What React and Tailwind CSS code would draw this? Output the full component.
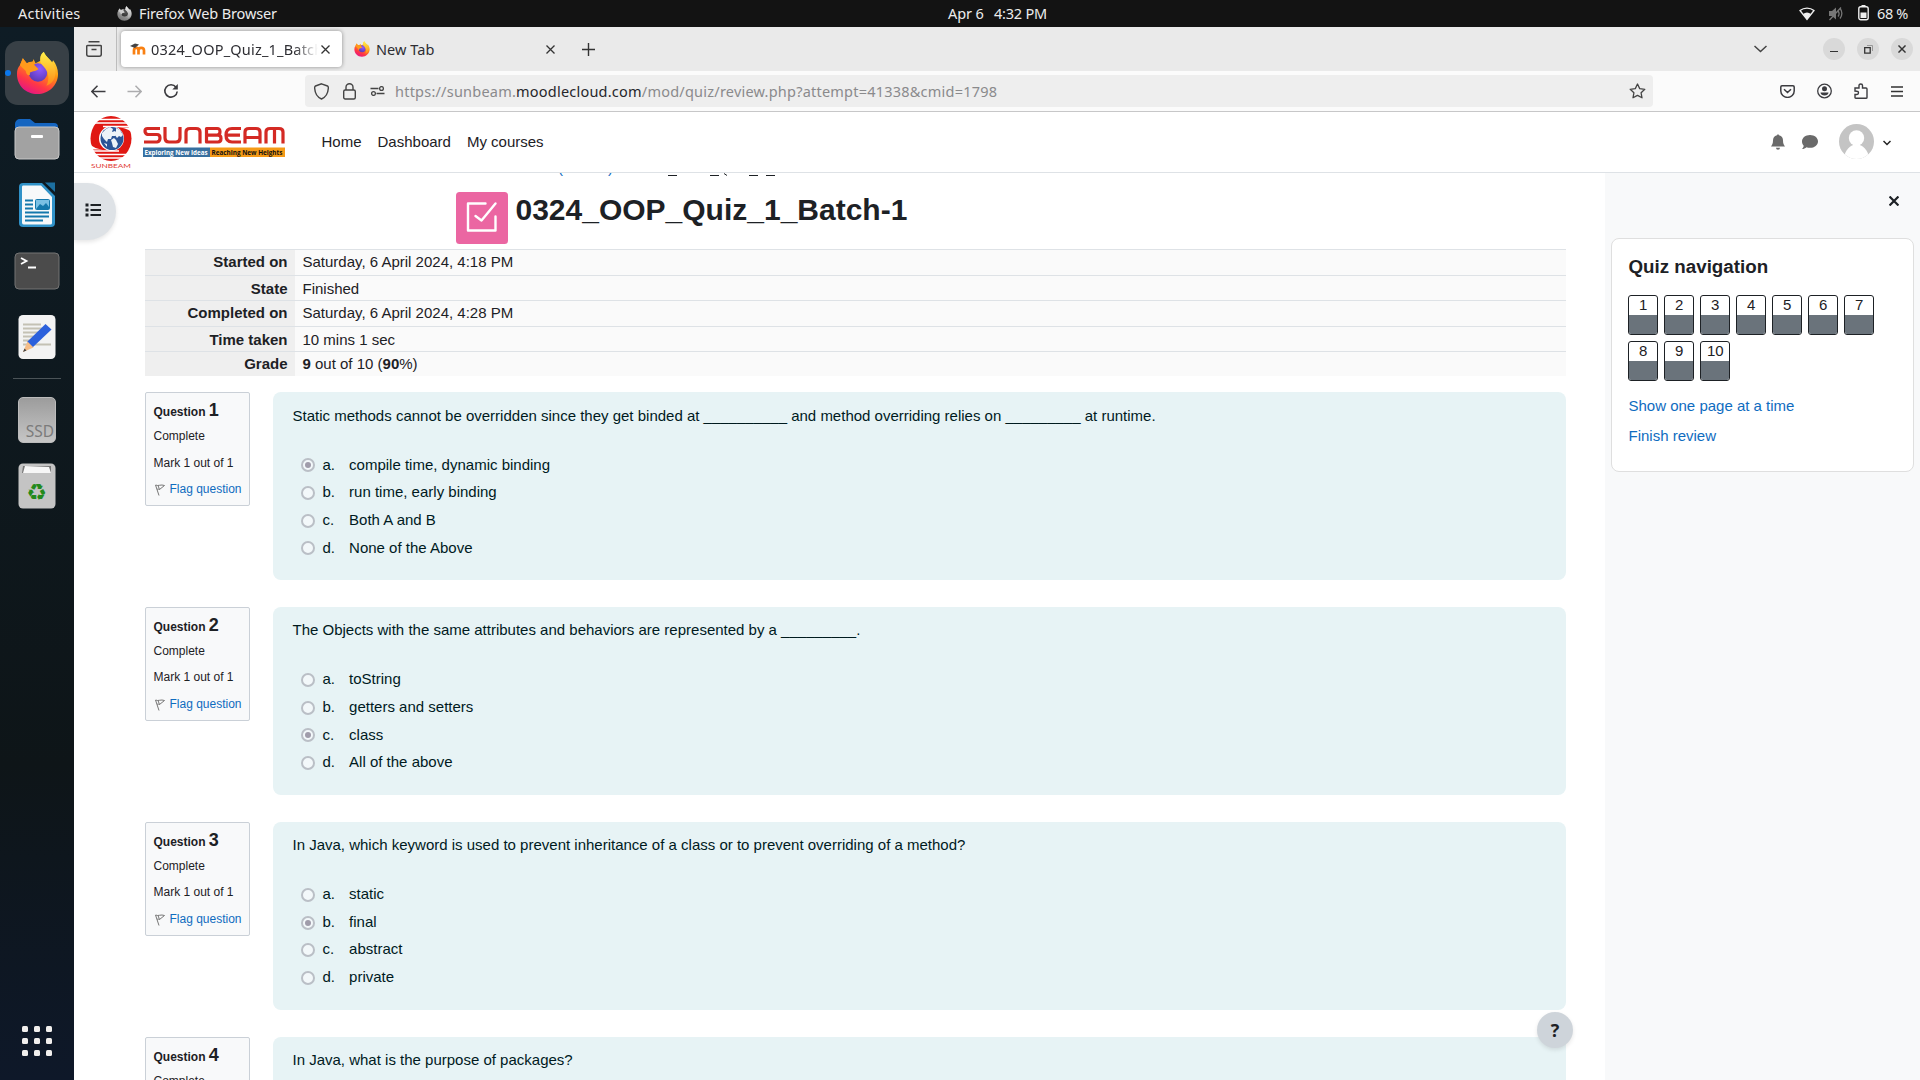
import React from "react";

const UB = "font-['Noto_Sans',sans-serif]";

function Firefox({ className, mono }) {
  const id = mono ? "m" : "c";
  return (
    <svg viewBox="0 0 44 44" className={className}>
      <defs>
        <linearGradient id={"o" + id} x1="0.8" y1="0" x2="0.3" y2="1">
          <stop offset="0" stopColor={mono ? "#eee" : "#fff44f"} />
          <stop offset="0.4" stopColor={mono ? "#bbb" : "#ff980e"} />
          <stop offset="0.75" stopColor={mono ? "#888" : "#ff3647"} />
          <stop offset="1" stopColor={mono ? "#777" : "#e31587"} />
        </linearGradient>
        <linearGradient id={"y" + id} x1="0.5" y1="0" x2="0.5" y2="1">
          <stop offset="0" stopColor={mono ? "#eee" : "#fff04a"} />
          <stop offset="1" stopColor={mono ? "#aaa" : "#ff8a16"} />
        </linearGradient>
        <radialGradient id={"p" + id} cx="0.6" cy="0.3" r="0.7">
          <stop offset="0" stopColor={mono ? "#555" : "#9059ff"} />
          <stop offset="1" stopColor={mono ? "#333" : "#5b3bb8"} />
        </radialGradient>
      </defs>
      <path d="M4 14 L7 7 L11 12 C13 11 15 10.500 17 10.500 L18 8 L20 12 L26 9 C24 5 26 2 28.500 0.500 C30 5 35 8 37 11 L38 9 C41 13 43 18 43 23 C43 35 33 43.500 22 43.500 C10 43.500 1 35 1 23 C1 19 2 16 4 14Z" fill={"url(#o" + id + ")"} />
      <circle cx="22.500" cy="21.500" r="9.500" fill={"url(#p" + id + ")"} />
      <path d="M28.500 0.500 C30 5 38 10 40 18 C42 28 36 34 31 35 C35 28 33 20 28 15 C23 11 24 4 28.500 0.500Z" fill={"url(#y" + id + ")"} />
      <path d="M4 14 L7 7 L11 12 C13 11 15 10.500 17 10.500 L18 8 L19 14 L23 18 C20 21 16 20 14 22 C16 24 11 27 10 20Z" fill={mono ? "#ccc" : "#ff9a1c"} />
    </svg>
  );
}

function TopBar() {
  return (
    <div className={"flex h-[27px] shrink-0 items-center bg-[#131313] text-[14.5px] text-[#ececec] " + UB}>
      <span className="ml-[18px] w-[99px] whitespace-nowrap tracking-[0.2px]">Activities</span>
      <Firefox mono className="h-[15px] w-[15px]" />
      <span className="ml-[7px] w-[809px] whitespace-nowrap tracking-[-0.12px]">Firefox Web Browser</span>
      <span className="w-[46px] whitespace-nowrap tracking-[-0.1px]">Apr 6</span>
      <span className="whitespace-nowrap tracking-[-0.2px]">4:32 PM</span>
      <div className="ml-auto flex items-center pr-[11px]">
        <svg width="16" height="14" viewBox="0 0 16 14" className="mr-[13px]">
          <path d="M1 3.500C5 0.200 11 0.200 15 3.500L8 12.500Z" fill="none" stroke="#eee" strokeWidth="1.300" />
          <path d="M4 7C6.500 5 9.500 5 12 7L8 12.500Z" fill="#eee" />
        </svg>
        <svg width="16" height="15" viewBox="0 0 16 15" fill="none" stroke="#777" strokeWidth="1.300" className="mr-[14px]">
          <path d="M1 5h3l4-3.500v12L4 10H1z" fill="#777" stroke="none" />
          <path d="M10 5c1.200 1.500 1.200 4 0 5.500M12 2.500c2.500 2.500 2.500 7 0 10M1.500 14L13 1.500" />
        </svg>
        <svg width="11" height="16" viewBox="0 0 11 16" className="mr-[8px] mb-[2px]">
          <path d="M3.500 0h4v2h-4z" fill="#eee" />
          <rect x="0.800" y="1.800" width="9.400" height="13" rx="2" fill="none" stroke="#eee" strokeWidth="1.400" />
          <path d="M2.500 7.500h6v5.500h-6z" fill="#eee" />
        </svg>
        <span className="w-[32px] whitespace-nowrap tracking-[-0.4px]">68 %</span>
      </div>
    </div>
  );
}

function Dock() {
  return (
    <div className="flex w-[74px] shrink-0 flex-col items-center bg-linear-to-b from-[#0e1c25] via-[#0e1518] via-70% to-[#0e1829]">
      <div className="mt-[14px] flex h-16 w-16 items-center rounded-[13px] bg-[#384046]">
        <span className="h-[6px] w-[6px] rounded-full bg-[#0a78ee]" />
        <Firefox className="ml-[5px] h-[44px] w-[43px]" />
      </div>
      <svg width="46" height="42" viewBox="0 0 46 42" className="mt-[13px]">
        <path d="M1 6a5 5 0 0 1 5-5h10l5 4h19a4 4 0 0 1 4 4v18H1z" fill="#1565c0" />
        <rect x="1" y="9" width="44" height="32" rx="4" fill="#a2a2a2" stroke="#c8c8c8" />
        <rect x="17" y="17" width="12" height="3" rx="1" fill="#fff" />
      </svg>
      <svg width="38" height="46" viewBox="0 0 38 46" className="mt-[22px]">
        <path d="M5 1h19L37 14v27a4 4 0 0 1-4 4H5a4 4 0 0 1-4-4V5a4 4 0 0 1 4-4z" fill="#3092c8" />
        <path d="M5 3.500h18L34 15v26a1.500 1.500 0 0 1-1.500 1.500H6A2 2 0 0 1 4 41V5a1.500 1.500 0 0 1 1-1.500z" fill="#f7f9fa" />
        <path d="M27 0.500h10v9.500z" fill="#1c6fa0" />
        <path d="M7 18.500h8M7 22.500h8M7 26.500h8M7 30.500h24M7 34.500h24M7 38.500h18" stroke="#1478ac" strokeWidth="2" />
        <rect x="17.500" y="17.500" width="14" height="10" rx="1" fill="#7ac0e4" stroke="#1478ac" />
        <path d="M18 27l4-5 3 2 3-3 3 4v2z" fill="#1478ac" />
      </svg>
      <svg width="46" height="38" viewBox="0 0 46 38" className="mt-[24px]">
        <rect x="1" y="1" width="44" height="36" rx="4" fill="#4b4b4b" stroke="#747474" />
        <path d="M7 6l5.500 3L7 12M14 15.500h8" fill="none" stroke="#fff" strokeWidth="1.800" />
      </svg>
      <svg width="38" height="46" viewBox="0 0 38 46" className="mt-[24px]">
        <rect x="0.500" y="1" width="37" height="44" rx="4.500" fill="#f3f3f3" />
        <path d="M5 10.500h18M5 14.500h22M5 18.500h18M5 22.500h14M5 26.500h10M5 30.500h28" stroke="#c4c1b4" strokeWidth="2" />
        <path d="M27.500 10l6 5.500L14.500 33.500l-5.500-5.500z" fill="#2b60dc" />
        <path d="M9.500 27.500l6 6L5 38z" fill="#f5bd88" />
        <path d="M6.500 34.500l2 2L5 38z" fill="#444" />
      </svg>
      <div className="mt-[18px] h-px w-[48px] bg-[#4b5357]" />
      <div className="mt-[18px] flex h-[46px] w-[38px] items-end justify-end rounded-[5px] border border-[#bbb] bg-linear-to-b from-[#9c9c9c] to-[#c6c6c6] pr-px font-['Noto_Sans',sans-serif] text-[15.500px] leading-[22px] text-[#7b7b7b]">SSD</div>
      <svg width="38" height="46" viewBox="0 0 38 46" className="mt-[20px]">
        <rect x="0.500" y="0.500" width="37" height="45" rx="4.500" fill="#c4c4c4" />
        <path d="M5 3h28v7H4z" fill="#777" />
        <path d="M7 3l24 1 2 6H5z" fill="#f7f7f7" />
        <text x="18.500" y="36.500" textAnchor="middle" fontSize="23" fill="#238a1c" fontFamily="DejaVu Sans, sans-serif">♻</text>
      </svg>
      <div className="mt-auto mb-[24px] grid grid-cols-3 gap-x-[6px] gap-y-[6px]">
        {Array.from({ length: 9 }, (_, i) => (
          <span key={i} className="h-[6px] w-[6px] rounded-[1.5px] bg-[#f1efed]" />
        ))}
      </div>
    </div>
  );
}

function CloseX({ size = 9, w = 1.3, color = "#333" }) {
  return (
    <svg width={size} height={size} viewBox="0 0 9 9" stroke={color} strokeWidth={w}>
      <path d="M0.500 0.500L8.500 8.500M8.500 0.500L0.500 8.500" />
    </svg>
  );
}

function TabBar() {
  return (
    <div className={"flex h-[44px] shrink-0 items-center bg-[#eaeaea] text-[14.5px] text-[#2e2e33] " + UB}>
      <div className="flex h-full w-[43px] items-center justify-center border-r border-[#bdbdbd] pr-[2px]">
        <svg width="16" height="17" viewBox="0 0 16 17" fill="none" stroke="#444" strokeWidth="1.500">
          <path d="M2.500 0.800h11M1.500 4.500h13a0.800 0.800 0 0 1 .8.800v8a2 2 0 0 1-2 2H2.700a2 2 0 0 1-2-2v-8a.8.8 0 0 1 .8-.8zM5.500 8.500h5" />
        </svg>
      </div>
      <div className="ml-[4px] flex h-[36px] w-[221px] items-center rounded-[4px] bg-white pl-[9px] shadow-[0_0_4px_rgba(0,0,0,0.4)]">
        <svg width="16" height="12" viewBox="0 0 16 12">
          <path d="M4 11.500V7.500C4 4 8.500 4 8.500 7.500V11.500M8.500 7.500C8.500 4 14 4 14 7.500V11.500" fill="none" stroke="#f98012" strokeWidth="2.700" />
          <path d="M0 3L5 0.500L9 1.500L5 5Z" fill="#444" />
        </svg>
        <div className="mt-[2px] ml-[5px] w-[167px] overflow-hidden whitespace-nowrap tracking-[0.2px] [mask-image:linear-gradient(to_right,black_86%,transparent)]">0324_OOP_Quiz_1_Batch-1</div>
        <div className="ml-[3px]"><CloseX /></div>
      </div>
      <Firefox className="ml-[12px] h-[16px] w-[16px]" />
      <span className="mt-[2px] ml-[6px] w-[170px] tracking-[0.05px]">New Tab</span>
      <CloseX />
      <svg width="13" height="13" viewBox="0 0 13 13" stroke="#333" strokeWidth="1.400" className="ml-[27px]"><path d="M6.500 0v13M0 6.500h13" /></svg>
      <div className="ml-auto flex items-center pr-[7px]">
        <svg width="13" height="8" viewBox="0 0 13 8" fill="none" stroke="#444" strokeWidth="1.500" className="mr-[56px]"><path d="M0.500 1l6 5.500 6-5.500" /></svg>
        <div className="flex gap-[12px]">
          <div className="flex h-[22px] w-[22px] items-center justify-center rounded-full bg-[#d9d9d9]"><div className="mt-[5px] h-px w-[8px] bg-[#333]" /></div>
          <div className="flex h-[22px] w-[22px] items-center justify-center rounded-full bg-[#d9d9d9]">
            <svg width="9" height="9" viewBox="0 0 9 9" fill="none"><path d="M3 0.500h5.500V6" stroke="#999" /><path d="M0.700 2.700h5.500v5.500H0.700z" stroke="#333" strokeWidth="1.300" /></svg>
          </div>
          <div className="flex h-[22px] w-[22px] items-center justify-center rounded-full bg-[#d9d9d9]"><CloseX size={8} w={1.6} /></div>
        </div>
      </div>
    </div>
  );
}

function ToolBar() {
  return (
    <div className="flex h-[41px] shrink-0 items-center border-b border-[#c7c7c8] bg-[#fbfbfb]">
      <svg width="15" height="13" viewBox="0 0 15 13" fill="none" stroke="#3c3c40" strokeWidth="1.500" className="ml-[16.5px]"><path d="M14.500 6.500H1M6.500 0.700L0.800 6.500l5.700 5.800" /></svg>
      <svg width="15" height="13" viewBox="0 0 15 13" fill="none" stroke="#acacae" strokeWidth="1.500" className="ml-[21px]"><path d="M0.500 6.500H14M8.500 0.700l5.700 5.800-5.700 5.800" /></svg>
      <svg width="16" height="16" viewBox="0 0 16 16" fill="none" stroke="#3c3c40" strokeWidth="1.600" className="ml-[21px]"><path d="M13 4.200A6.200 6.200 0 1 0 14.200 8.500" /><path d="M14.800 1v5.500H9.300z" fill="#3c3c40" stroke="none" /></svg>
      <div className={"ml-[126.5px] flex h-8 w-[1348px] items-center rounded-[4px] bg-[#eeeeee] text-[14.5px] " + UB}>
        <svg width="15" height="17" viewBox="0 0 15 17" fill="none" stroke="#444" strokeWidth="1.400" className="ml-[8.5px]"><path d="M7.500 0.800L13.500 3c1 .4.900 1 .8 2.500C14 10 12 14 7.500 16 3 14 1 10 .7 5.500.600 4 .5 3.400 1.500 3z" /></svg>
        <svg width="13" height="17" viewBox="0 0 13 17" fill="none" stroke="#444" strokeWidth="1.400" className="ml-[14px]"><rect x="0.700" y="7" width="11.600" height="9" rx="1.500" /><path d="M3 7V4.200a3.500 3.500 0 0 1 7 0V7" /></svg>
        <svg width="15" height="10" viewBox="0 0 15 10" fill="none" stroke="#444" strokeWidth="1.300" className="ml-[14px]"><path d="M0.500 2.500h8M6.500 7.500h8" /><circle cx="11.500" cy="2.500" r="1.900" /><circle cx="3.500" cy="7.500" r="1.900" /></svg>
        <span className="mt-[2px] ml-[10.5px] whitespace-nowrap text-[#8a8a8c] tracking-[0.22px]">https://sunbeam.<span className="text-[#26262a]">moodlecloud.com</span>/mod/quiz/review.php?attempt=41338&amp;cmid=1798</span>
        <svg width="17" height="16" viewBox="0 0 17 16" fill="none" stroke="#444" strokeWidth="1.300" strokeLinejoin="round" className="mr-[7.5px] ml-auto"><path d="M8.500 1l2.200 4.600 5.100.7-3.700 3.500.9 5-4.500-2.400L4 14.800l.9-5L1.200 6.300l5.100-.7z" /></svg>
      </div>
      <div className="ml-auto flex items-center pr-[17.5px]">
        <svg width="15" height="13" viewBox="0 0 15 13" fill="none" stroke="#3c3c40" strokeWidth="1.500" className="mr-[22px]"><path d="M2 .8h11c.7 0 1.200.5 1.200 1.200v4A6.500 6.200 0 0 1 .8 6V2C.8 1.300 1.300.8 2 .8zM4 4.200l3.500 3.300L11 4.200" /></svg>
        <svg width="15" height="16" viewBox="0 0 15 16" className="mr-[22px]"><circle cx="7.500" cy="8" r="6.800" fill="none" stroke="#3c3c40" strokeWidth="1.300" /><circle cx="7.500" cy="5.800" r="2.500" fill="#3c3c40" /><path d="M3.500 9.500h8c0 4-8 4-8 0z" fill="#3c3c40" /></svg>
        <svg width="14" height="16" viewBox="0 0 14 16" fill="none" stroke="#3c3c40" strokeWidth="1.400" className="mr-[23px]"><path d="M1 8V5h4V2.500c0-2 3.500-2 3.500 0V5H12c.6 0 1 .4 1 1v8.500c0 .5-.4.800-1 .8H1.800c-.5 0-.8-.3-.8-.8v-3h2c2 0 2-3.300 0-3.300z" /></svg>
        <svg width="12" height="11" viewBox="0 0 12 11" stroke="#333" strokeWidth="1.300"><path d="M0 1h12M0 5.500h12M0 10h12" /></svg>
      </div>
    </div>
  );
}

function Logo() {
  return (
    <div className="flex items-center">
      <svg width="44" height="54" viewBox="0 0 44 54">
        <ellipse cx="22" cy="23.500" rx="20.500" ry="22.500" fill="#e01712" />
        <path d="M6 4.500h34M4 8h36M14 11.500h29M0 36h30M2 39.500h38M6 43h32" stroke="#fff" strokeWidth="1.300" />
        <path d="M30 12.500C35 13 41 14.500 44 19V12.500zM0 28C4 33 9 34 14 34.500H0z" fill="#fff" />
        <circle cx="22.500" cy="23.500" r="12.500" fill="#fff" />
        <circle cx="23" cy="23.500" r="11.500" fill="#2b5497" />
        <path d="M13 18l4-4 4-2 3 2-1 3 3-1 2 2-2 3-3 0-1 3-3 0-1 3-3-3-2-3zM27 13l4 2 3 5-2 2-2-1-2 2-2-3 1-3zM22 25l3-2 2 2 2 4-2 4-3-1-1-4zM15 28l3 1 0 3z" fill="#edf2f8" />
        <text x="2" y="53" fontSize="6.500" textLength="40" lengthAdjust="spacingAndGlyphs" fill="#df3b35" fontFamily="Lato, sans-serif">SUNBEAM</text>
      </svg>
      <svg width="142" height="36" viewBox="0 0 142 36" className="mt-[3px] ml-[10px]">
        <g fill="none" stroke="#d42a24" strokeWidth="3.200" strokeLinejoin="round">
          <path d="M17 2.500H4.500Q2 2.500 2 5T4.500 8.500H14Q17 8.500 17 12T14 16H1" />
          <path d="M22 1v11Q22 16 26 16h7Q37 16 37 12V1" />
          <path d="M43 17.500V6Q43 2.500 47 2.500h6Q57 2.500 57 6v11.500" />
          <path d="M63.500 9.200H74Q77 9.200 77 5.800T74 2.500H63.500V16H75Q78 16 78 12.600T75 9.200" />
          <path d="M98 2.500H89Q83 2.500 83 9.200T89 16h9M84 9.200h13" />
          <path d="M102 17.500V6Q102 2.500 106 2.500h7Q117 2.500 117 6v11.500M103 11.500h14" />
          <path d="M123 17.500V6Q123 2.500 127 2.500h9Q140 2.500 140 6v11.500M131.500 3v14.500" />
        </g>
        <rect x="0" y="21.500" width="67" height="9.500" fill="#376f9f" />
        <rect x="67" y="21.500" width="75" height="9.500" fill="#f59a17" />
        <text x="1.500" y="28.500" fontSize="7" fontWeight="bold" textLength="63" lengthAdjust="spacingAndGlyphs" fill="#fff" fontFamily="Open Sans, sans-serif">Exploring New Ideas</text>
        <text x="68.500" y="28.500" fontSize="7" fontWeight="bold" textLength="71" lengthAdjust="spacingAndGlyphs" fill="#111" fontFamily="Open Sans, sans-serif">Reaching New Heights</text>
      </svg>
    </div>
  );
}

function SiteHeader() {
  return (
    <div className="flex h-[61px] shrink-0 items-center border-b border-[#dee2e6] bg-white text-[15px] text-[#1d2125]">
      <div className="ml-[15px]"><Logo /></div>
      <div className="ml-[36.5px] flex gap-[16px]"><span>Home</span><span>Dashboard</span><span>My courses</span></div>
      <div className="ml-auto flex items-center pr-[29px]">
        <svg width="14" height="16" viewBox="0 0 14 16" fill="#6a6a6a" className="mr-[17px]"><path d="M7 0l1 1.200c3 .5 4 3 4 5.300 0 3 .8 4.500 2 6H0c1.200-1.500 2-3 2-6C2 4 3 1.700 6 1.200zM5 13.800h4a2 2 0 0 1-4 0z" /></svg>
        <svg width="16" height="14" viewBox="0 0 16 14" fill="#6a6a6a" className="mr-[21px]"><path d="M8 0c4.500 0 8 2.800 8 6.400s-3.500 6.400-8 6.400c-1.300 0-2.500-.2-3.500-.6C3.300 13.200 1.800 14 0 14c1-1 1.500-2 1.700-3.300C.600 9.500 0 8 0 6.400 0 2.800 3.500 0 8 0z" /></svg>
        <svg width="35" height="35" viewBox="0 0 35 35" className="mr-[9px] mb-px"><clipPath id="av"><circle cx="17.500" cy="17.500" r="17.500" /></clipPath><g clipPath="url(#av)"><path d="M0 0h35v35H0z" fill="#c4c4c4" /><circle cx="17.500" cy="14" r="7.700" fill="#fff" /><path d="M4.500 35C6 26 11 20.500 17.500 20.500S29 26 30.500 35z" fill="#fff" /></g></svg>
        <svg width="8" height="6" viewBox="0 0 8 6" fill="none" stroke="#222" strokeWidth="1.500" className="mt-px"><path d="M0.500 1L4 4.500 7.500 1" /></svg>
      </div>
    </div>
  );
}

const rows = [
  ["Started on", "Saturday, 6 April 2024, 4:18 PM"],
  ["State", "Finished"],
  ["Completed on", "Saturday, 6 April 2024, 4:28 PM"],
  ["Time taken", "10 mins 1 sec"],
  ["Grade", <><b>9</b> out of 10 (<b>90</b>%)</>],
];

const questions = [
  { text: "Static methods cannot be overridden since they get binded at __________ and method overriding relies on _________ at runtime.", options: ["compile time, dynamic binding", "run time, early binding", "Both A and B", "None of the Above"], selected: 0 },
  { text: "The Objects with the same attributes and behaviors are represented by a _________.", options: ["toString", "getters and setters", "class", "All of the above"], selected: 2 },
  { text: "In Java, which keyword is used to prevent inheritance of a class or to prevent overriding of a method?", options: ["static", "final", "abstract", "private"], selected: 1 },
  { text: "In Java, what is the purpose of packages?", options: [], selected: -1 },
];

function Question({ q, n }) {
  return (
    <div className="mb-[26.75px] flex h-[188px] items-start">
      <div className="h-[114px] w-[105px] shrink-0 rounded-[2px] border border-[#cad0d7] bg-[#f8f9fa] pl-[7.5px] text-[12px] text-[#1d2125]">
        <div className="mt-[6px] h-[23px] leading-[23px] font-bold whitespace-nowrap">Question <span className="text-[18px]">{n}</span></div>
        <div className="mt-[5px] leading-[18px]">Complete</div>
        <div className="mt-[8.2px] leading-[18px] whitespace-nowrap">Mark 1 out of 1</div>
        <div className="mt-[8.8px] flex items-center leading-[18px] whitespace-nowrap text-[#0f6cbf]">
          <svg width="10" height="12" viewBox="0 0 10 12" fill="none" stroke="#777" strokeWidth="1" className="mt-[2px] mr-[5px] ml-px"><path d="M0.500 1L4 11.500M0.700 1C3 2.500 6 0 9.500 1.500L4.500 5.500C3.500 5 2.500 5 2 5.500M3 1.500l1.500 4" /></svg>
          Flag question
        </div>
      </div>
      <div className="ml-[23px] h-full flex-1 rounded-[8px] bg-[#e7f3f5] pt-[11.3px] pl-[19.5px] text-[15px] text-[#001a1e]">
        <div className="leading-[23px]">{q.text}</div>
        <div className="mt-[24.5px]">
          {q.options.map((o, i) => (
            <div key={o} className="flex h-[27.6px] items-center">
              <span className="mt-px ml-[8.5px] flex h-[14px] w-[14px] items-center justify-center rounded-full border-2 border-[#babfc6] bg-[#f3f8fa]">
                {i === q.selected && <span className="h-[6px] w-[6px] rounded-full bg-[#a09caa]" />}
              </span>
              <span className="ml-[7.5px] w-[26.6px]">{"abcd"[i]}.</span>
              <span>{o}</span>
            </div>
          ))}
        </div>
      </div>
    </div>
  );
}

function Main() {
  return (
    <main className="relative h-full flex-1 overflow-hidden bg-white">
      <div className="flex h-[3px] items-end overflow-hidden pl-[484px] text-[15px] leading-[17px] text-[#1d2125]">
        <span className="flex w-[55px] justify-between text-[#0f6cbf]"><span>(</span><span>)</span></span>
        <svg width="170" height="3" viewBox="0 0 170 3" stroke="#1d2125" strokeWidth="1" fill="none"><path d="M55 2.500h9M97 2.500h9M111 0.500l3 2M136 2.500h9M153 2.500h9" /></svg>
      </div>
      <div className="mt-[16px] ml-[382px] flex h-[52px]">
        <svg width="52" height="52" viewBox="0 0 52 52"><rect width="52" height="52" rx="3.500" fill="#eb66a2" /><g fill="none" stroke="#fff" strokeWidth="2.400" strokeLinejoin="round" strokeLinecap="round"><path d="M29.500 11.500H12v27h27.500V24.500" /><path d="M19.500 24l6 4.500 14-17" /></g></svg>
        <h1 className="ml-[7.5px] text-[30px] leading-[36px] font-bold whitespace-nowrap text-[#1d2125]">0324_OOP_Quiz_1_Batch-1</h1>
      </div>
      <div className="mt-[5px] ml-[71px] w-[1421px] text-[15px] text-[#1d2125]">
        {rows.map(([k, v], i) => (
          <div key={k} className={(i % 2 ? "h-[25px] leading-[25px]" : "h-[26px] leading-[24px]") + " flex border-t border-[#dee2e6] last:h-[25px]"}>
            <div className="w-[150px] bg-[#efefef] pr-[7.5px] text-right font-bold">{k}</div>
            <div className="flex-1 bg-[#fafafa] pl-[7.5px]">{v}</div>
          </div>
        ))}
      </div>
      <div className="mt-[16.4px] ml-[71px] w-[1421px]">
        {questions.map((q, i) => <Question key={i} q={q} n={i + 1} />)}
      </div>
      <div className="absolute top-[10px] left-0 flex h-[57px] w-[42px] items-center rounded-r-full bg-[#dee2e6] pb-[3px] pl-[11px] shadow-[0_2px_4px_rgba(0,0,0,0.1)]">
        <svg width="16" height="14" viewBox="0 0 16 14" stroke="#1d2125" strokeWidth="2"><path d="M5.500 2H16M5.500 7H16M5.500 12H16" /><path d="M0.500 2h3M0.500 7h3M0.500 12h3" strokeWidth="3" /></svg>
      </div>
      <div className="absolute right-[32px] bottom-[32px] flex h-[36px] w-[36px] items-center justify-center rounded-full bg-[#ced4da] font-['Open_Sans',sans-serif] text-[18px] font-bold text-[#1d2125] shadow-[0_2px_4px_rgba(0,0,0,0.1)]">?</div>
    </main>
  );
}

function Drawer() {
  return (
    <aside className="h-full w-[315px] shrink-0 bg-[#f8f9fa]">
      <div className="mt-[23px] mr-[21px] flex justify-end"><CloseX size={10} w={2} color="#1d2125" /></div>
      <div className="mt-[32px] ml-[6px] h-[234px] w-[303px] rounded-[8px] border border-[#dfdfdf] bg-white pt-[16px] pl-[16px] text-[15px] text-[#1d2125]">
        <h2 className="ml-[0.5px] text-[18.75px] leading-[23px] font-bold">Quiz navigation</h2>
        <div className="mt-[17px] grid w-[246px] grid-cols-7 gap-[6px]">
          {Array.from({ length: 10 }, (_, i) => (
            <div key={i} className="h-10 w-[30px] overflow-hidden rounded-[3px] border border-[#1d2125] bg-white text-center">
              <div className="h-[19px] pl-[0.5px] leading-[18px]">{i + 1}</div>
              <div className="h-[19px] bg-[#6a737b]" />
            </div>
          ))}
        </div>
        <div className="mt-[13px] ml-[0.5px] leading-[23px] text-[#0f6cbf]">Show one page at a time</div>
        <div className="mt-[7px] ml-[0.5px] leading-[23px] text-[#0f6cbf]">Finish review</div>
      </div>
    </aside>
  );
}

export default function App() {
  return (
    <div className="flex h-[1080px] w-[1920px] flex-col overflow-hidden bg-white font-['Liberation_Sans',sans-serif]">
      <TopBar />
      <div className="flex min-h-0 flex-1">
        <Dock />
        <div className="flex min-w-0 flex-1 flex-col">
          <TabBar />
          <ToolBar />
          <SiteHeader />
          <div className="flex min-h-0 flex-1">
            <Main />
            <Drawer />
          </div>
        </div>
      </div>
    </div>
  );
}
